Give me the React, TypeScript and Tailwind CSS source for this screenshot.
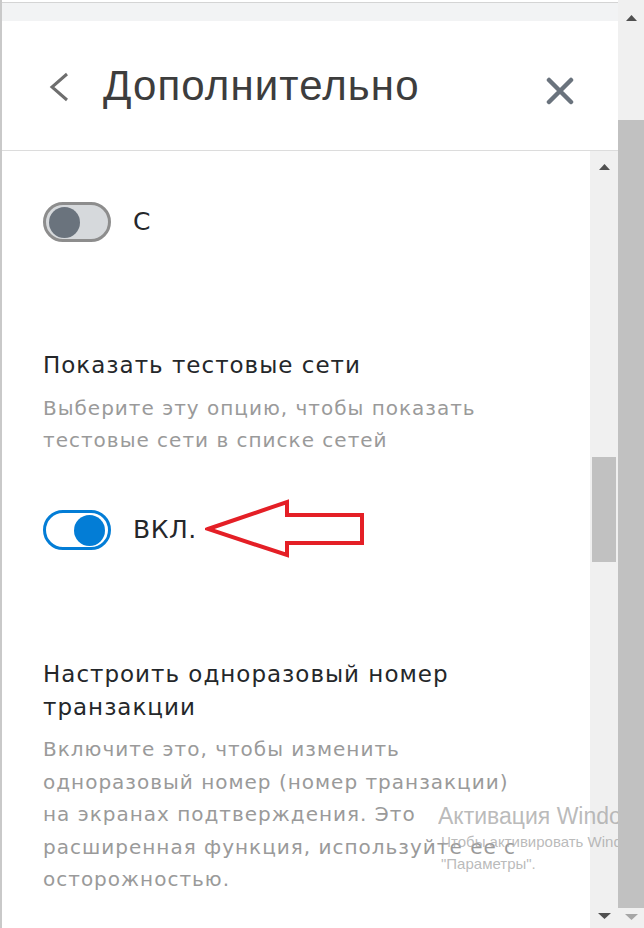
import React from "react";

const body = { fontFamily: '"DejaVu Sans", "Noto Sans", sans-serif' };
const head = { fontFamily: '"Liberation Sans", Arial, sans-serif' };

function Toggle({ on }: { on: boolean }) {
  return on ? (
    <div className="w-[68px] h-[40px] rounded-full border-[3px] border-[#037dd6] bg-white flex items-center justify-end pr-[3px]">
      <div className="w-[31px] h-[31px] rounded-full bg-[#037dd6]" />
    </div>
  ) : (
    <div className="w-[68px] h-[40px] rounded-full border-[3px] border-[#8d8d8d] bg-[#d6d9dc] flex items-center pl-[3px]">
      <div className="w-[31px] h-[31px] rounded-full bg-[#6a737d]" />
    </div>
  );
}

function Arrow() {
  return (
    <svg width="170" height="64" viewBox="0 0 170 64" className="ml-[8px] my-[-12px]">
      <polygon
        points="3,31 82,4 82,17 157,17 157,45 82,45 82,57"
        fill="none"
        stroke="#e41f26"
        strokeWidth="4"
        strokeLinejoin="miter"
      />
    </svg>
  );
}

function UpTri({ color }: { color: string }) {
  return (
    <svg width="11" height="6" viewBox="0 0 11 6">
      <polygon points="0,6 5.5,0 11,6" fill={color} />
    </svg>
  );
}

function DownTri({ color }: { color: string }) {
  return (
    <svg width="13" height="6" viewBox="0 0 13 6">
      <polygon points="0,0 13,0 6.5,6" fill={color} />
    </svg>
  );
}

export default function App() {
  return (
    <div className="w-[644px] h-[928px] bg-white flex overflow-hidden relative">
      {/* panel */}
      <div className="flex-1 flex flex-col border-l-2 border-[#c9c9c9] min-w-0">
        <div className="h-[3px] bg-white border-b border-[#d4d4d4]" />
        <div className="h-[18px] bg-[#f2f3f4]" />
        <div className="h-[130px] bg-white border-b border-[#dcdcdc] flex items-center pl-[44px] pr-[44px]">
          <svg width="24" height="32" viewBox="0 0 24 32" className="mt-[2px]">
            <polyline points="21,3 6,16 21,29" fill="none" stroke="#6e6e6e" strokeWidth="3" />
          </svg>
          <div className="ml-[33px] flex-1 text-[42px] tracking-[1.1px] leading-none text-[#3d3d3d]" style={head}>
            Дополнительно
          </div>
          <svg width="28" height="28" viewBox="0 0 28 28" className="mt-[10px]">
            <path d="M3 3 L25 25 M25 3 L3 25" stroke="#6a737d" strokeWidth="4.5" strokeLinecap="round" />
          </svg>
        </div>
        <div className="flex-1 flex min-h-0">
          <div className="flex-1 pl-[41px] pt-[51px] overflow-hidden" style={body}>
            <div className="flex items-center">
              <Toggle on={false} />
              <span className="ml-[22px] text-[25px] text-[#24272a]">С</span>
            </div>
            <div className="mt-[107px] text-[23px] tracking-[1px] leading-[33px] text-[#24272a]">Показать тестовые сети</div>
            <div className="mt-[10px] text-[20px] tracking-[1px] leading-[32px] text-[#9a9a9a]">
              Выберите эту опцию, чтобы показать
              <br />
              тестовые сети в списке сетей
            </div>
            <div className="mt-[54px] flex items-center">
              <Toggle on={true} />
              <span className="ml-[22px] text-[25px] tracking-[0.5px] text-[#24272a]">ВКЛ.</span>
              <Arrow />
            </div>
            <div className="mt-[108px] text-[23px] tracking-[1px] leading-[33px] text-[#24272a]">
              Настроить одноразовый номер
              <br />
              транзакции
            </div>
            <div className="mt-[9px] text-[20px] tracking-[1px] leading-[32.5px] text-[#9a9a9a]">
              Включите это, чтобы изменить
              <br />
              одноразовый номер (номер транзакции)
              <br />
              на экранах подтверждения. Это
              <br />
              расширенная функция, используйте ее с
              <br />
              осторожностью.
            </div>
          </div>
          {/* inner scrollbar */}
          <div className="w-[28px] bg-[#f0f0f0] flex flex-col items-center pt-[13px] pb-[9px]">
            <UpTri color="#505050" />
            <div className="flex-1 w-full flex flex-col pt-[287px]">
              <div className="h-[105px] mx-[2px] bg-[#c1c1c1]" />
            </div>
            <DownTri color="#505050" />
          </div>
        </div>
      </div>
      {/* outer scrollbar */}
      <div className="w-[26px] bg-[#f0f0f0] flex flex-col items-center pt-[15px] pb-[8px]">
        <UpTri color="#505050" />
        <div className="flex-1 w-full pt-[99px] pb-[6px] flex flex-col">
          <div className="flex-1 bg-[#c1c1c1]" />
        </div>
        <DownTri color="#a6a6a6" />
      </div>
      {/* windows watermark */}
      <div className="absolute left-[438px] top-[800px] w-[180px] overflow-hidden whitespace-nowrap pointer-events-none" style={{ fontFamily: '"Liberation Sans", Arial, sans-serif' }}>
        <div className="text-[23px] leading-[32px] text-[#a9a9a9]/80">Активация Windows</div>
        <div className="pl-[3px] text-[15px] leading-[20px] text-[#a9a9a9]/80">Чтобы активировать Windows</div>
        <div className="pl-[3px] text-[15px] leading-[24px] text-[#a9a9a9]/80">"Параметры".</div>
      </div>
    </div>
  );
}
